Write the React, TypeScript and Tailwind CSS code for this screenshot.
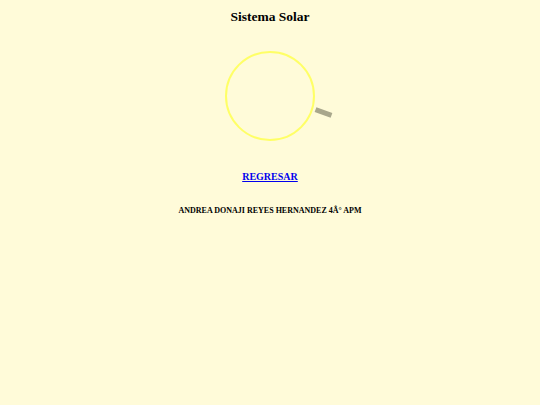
export default function App() {
  return (
    <div className="min-h-screen bg-[#fffbd9] font-['Liberation_Serif',serif] text-black">
      <div className="flex flex-col items-center">
        {/* Title */}
        <h1 className="mt-[8px] text-[13.5px] font-bold leading-[18px]">Sistema Solar</h1>

        {/* Orbit */}
        <div className="relative mt-[25px] h-[90px] w-[90px] rounded-full border-2 border-[#ffff66]">
          <div className="absolute left-[88px] top-[57px] h-[5px] w-[17px] rotate-[20deg] bg-[#a9a78c]" />
        </div>

        <a href="#" className="mt-[29px] text-[10px] font-bold leading-[14px] text-[#0000ee] underline">
          REGRESAR
        </a>

        <p className="mt-[21px] text-[8px] font-bold leading-[11px]">
          ANDREA DONAJI REYES HERNANDEZ 4Â° APM
        </p>
      </div>
    </div>
  );
}
